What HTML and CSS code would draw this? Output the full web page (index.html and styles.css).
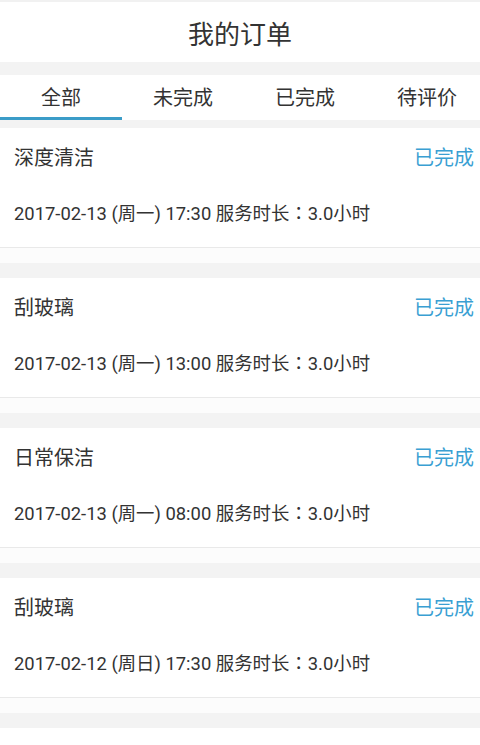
FILE: index.html
```html
<!DOCTYPE html>
<html lang="zh-CN">
<head>
<meta charset="utf-8">
<title>我的订单</title>
<link rel="stylesheet" href="styles.css">
</head>
<body>
<div class="page">
  <header class="topbar">我的订单</header>
  <nav class="tabs">
    <div class="tab active">全部</div>
    <div class="tab">未完成</div>
    <div class="tab">已完成</div>
    <div class="tab">待评价</div>
  </nav>
  <div class="orders">
    <div class="order">
      <div class="order-main">
        <div class="order-head"><span class="order-name">深度清洁</span><span class="order-status">已完成</span></div>
        <div class="order-time">2017-02-13 (周一) 17:30 服务时长<span class="colon">：</span>3.0小时</div>
      </div>
    </div>
    <div class="order">
      <div class="order-main">
        <div class="order-head"><span class="order-name">刮玻璃</span><span class="order-status">已完成</span></div>
        <div class="order-time">2017-02-13 (周一) 13:00 服务时长<span class="colon">：</span>3.0小时</div>
      </div>
    </div>
    <div class="order">
      <div class="order-main">
        <div class="order-head"><span class="order-name">日常保洁</span><span class="order-status">已完成</span></div>
        <div class="order-time">2017-02-13 (周一) 08:00 服务时长<span class="colon">：</span>3.0小时</div>
      </div>
    </div>
    <div class="order">
      <div class="order-main">
        <div class="order-head"><span class="order-name">刮玻璃</span><span class="order-status">已完成</span></div>
        <div class="order-time">2017-02-12 (周日) 17:30 服务时长<span class="colon">：</span>3.0小时</div>
      </div>
    </div>
    <div class="order">
      <div class="order-main">
        <div class="order-head"><span class="order-name">深度清洁</span><span class="order-status">已完成</span></div>
        <div class="order-time">2017-02-12 (周日) 08:00 服务时长<span class="colon">：</span>3.0小时</div>
      </div>
    </div>
  </div>
</div>
</body>
</html>
```

FILE: styles.css
```css
html, body {
  margin: 0;
  padding: 0;
  background: #f3f3f3;
}
.page {
  width: 480px;
  height: 745px;
  overflow: hidden;
  font-family: Roboto, "Noto Sans CJK SC", sans-serif;
  color: #333;
}
.topbar {
  border-top: 2px solid #f1f1f1;
  height: 60px;
  background: #fff;
  display: flex;
  align-items: center;
  justify-content: center;
  font-size: 26px;
  color: #333;
  margin-bottom: 13px;
}
.tabs {
  display: flex;
  height: 45px;
  background: #fff;
  overflow: hidden;
  margin-bottom: 8px;
}
.tab {
  flex: 0 0 122px;
  display: flex;
  align-items: center;
  justify-content: center;
  font-size: 20px;
  color: #333;
  box-sizing: border-box;
  padding-bottom: 3px;
}
.tab.active {
  border-bottom: 3px solid #3b9cc8;
  padding-bottom: 0;
}
.order {
  background: #fcfcfc;
  padding-bottom: 15px;
  margin-bottom: 15px;
}
.order-main {
  background: #fff;
  padding: 0 6px 7px 14px;
  border-bottom: 1px solid #e9e9e9;
}
.order-head {
  height: 56px;
  display: flex;
  align-items: center;
  justify-content: space-between;
  font-size: 20px;
}
.order-status {
  color: #3a9fd3;
}
.order-time {
  height: 56px;
  display: flex;
  align-items: center;
  font-size: 18.4px;
  color: #333;
}
.colon {
  font-family: "Noto Sans CJK TC", sans-serif;
}
```
